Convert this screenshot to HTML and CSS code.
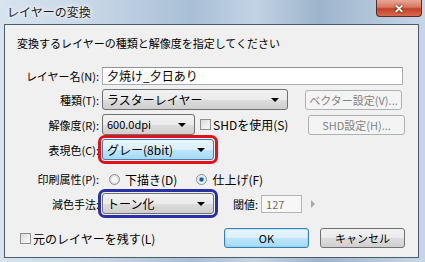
FILE: index.html
```html
<!DOCTYPE html>
<html lang="ja">
<head>
    <meta charset="utf-8" />
    <title>レイヤーの変換</title>
    <link rel="stylesheet" href="styles.css">
</head>
<body>
    <div class="window">
        <div class="titlebar">
            <span class="title">レイヤーの変換</span>
            <span class="close">✕</span>
        </div>
        <div class="client">
            <p class="intro">変換するレイヤーの種類と解像度を指定してください</p>

            <div class="row row-name">
                <label class="lbl">レイヤー名(N):</label>
                <div class="edit name">夕焼け_夕日あり</div>
            </div>

            <div class="row row-type">
                <label class="lbl">種類(T):</label>
                <div class="combo type">ラスターレイヤー<i class="arrow"></i></div>
                <button class="btn off">ベクター設定(V)...</button>
            </div>

            <div class="row row-res">
                <label class="lbl">解像度(R):</label>
                <div class="combo res">600.0dpi<i class="arrow"></i></div>
                <span class="check"><i class="box"></i>SHDを使用(S)</span>
                <button class="btn off shd">SHD設定(H)...</button>
            </div>

            <div class="row row-color">
                <label class="lbl">表現色(C):</label>
                <div class="combo focus mark-red">グレー(8bit)<i class="arrow"></i></div>
            </div>

            <div class="row row-print">
                <label class="lbl">印刷属性(P):</label>
                <span class="radio off-radio"><i class="dot"></i>下描き(D)</span>
                <span class="radio on"><i class="dot"></i>仕上げ(F)</span>
            </div>

            <div class="row row-reduce">
                <label class="lbl">減色手法:</label>
                <div class="combo mark-blue">トーン化<i class="arrow"></i></div>
                <span class="thr-lbl">閾値:</span>
                <div class="edit thr">127</div>
                <i class="spin"></i>
            </div>

            <div class="row row-bottom">
                <span class="check keep"><i class="box"></i>元のレイヤーを残す(L)</span>
                <button class="btn ok">OK</button>
                <button class="btn cancel">キャンセル</button>
            </div>
        </div>
    </div>
</body>
</html>
```

FILE: styles.css
```css
* {
    box-sizing: border-box;
}
html, body {
    margin: 0;
    padding: 0;
}
body {
    width: 425px;
    height: 262px;
    overflow: hidden;
    font-family: "Noto Sans CJK JP", sans-serif;
    font-size: 11px;
    color: #000;
}
.window {
    width: 425px;
    height: 262px;
    padding: 0 6px 4px 4px;
    display: flex;
    flex-direction: column;
    background: linear-gradient(90deg, #d7e3ef 0%, #c9d8e8 20%, #a9bfd6 45%, #c3d3e4 60%, #9db4cc 75%, #c6d6e7 100%);
}
.titlebar {
    height: 24px;
    display: flex;
    align-items: flex-start;
    justify-content: space-between;
}
.title {
    font-size: 12px;
    line-height: 24px;
    padding-left: 3px;
    color: #1a1a1a;
    text-shadow: 0 0 6px #fff, 0 0 3px #fff;
}
.close {
    width: 46px;
    height: 17px;
    margin-right: -3px;
    border: 1px solid #5e2a22;
    border-top: none;
    border-radius: 0 0 4px 4px;
    background: linear-gradient(#e9a798 0%, #d9765f 45%, #c2412a 55%, #d86a4c 100%);
    color: #fff;
    font-size: 12px;
    font-weight: bold;
    line-height: 16px;
    text-align: center;
    text-shadow: 0 0 2px #4a1a12, 0 0 1px #4a1a12;
}
.client {
    flex: 1;
    background: #f0f0f0;
    border: 1px solid #4c5c6c;
    padding-top: 11px;
    display: flex;
    flex-direction: column;
}
.intro {
    margin: 0 0 0 12px;
    line-height: 14px;
}
.row {
    display: flex;
    align-items: center;
}
.lbl {
    width: 94px;
    text-align: right;
    margin-right: 3px;
    white-space: nowrap;
}
.row-name { margin-top: 17px; height: 18px; }
.row-type { margin-top: 4px; height: 21px; }
.row-res { margin-top: 4px; height: 21px; }
.row-color { margin-top: 4px; height: 21px; }
.row-print { margin-top: 11px; height: 16px; }
.row-reduce { margin-top: 6px; height: 21px; }
.row-bottom { margin-top: 14px; height: 20px; }

.edit {
    height: 18px;
    background: #fff;
    border: 1px solid #abadb3;
    border-top-color: #8e9297;
    padding: 0 4px;
    line-height: 16px;
    font-size: 12px;
}
.edit.name {
    width: 301px;
}
.combo {
    position: relative;
    height: 21px;
    width: 112px;
    padding-left: 4px;
    line-height: 19px;
    font-size: 12px;
    border: 1px solid #707070;
    border-radius: 3px;
    background: linear-gradient(#f2f2f2 0%, #ebebeb 50%, #dddddd 51%, #cfcfcf 100%);
}
.combo.type {
    width: 186px;
}
.combo.res {
    width: 93px;
    font-size: 11px;
}
.combo.focus {
    border-color: #3c7fb1;
    background: linear-gradient(#eaf6fd 0%, #d9f0fc 50%, #bee6fd 51%, #a7d9f5 100%);
}
.arrow {
    position: absolute;
    right: 8px;
    top: 8px;
    width: 0;
    height: 0;
    border-left: 4px solid transparent;
    border-right: 4px solid transparent;
    border-top: 4px solid #000;
}
.mark-red {
    outline: 3px solid #e3111c;
    outline-offset: 1px;
}
.mark-blue {
    outline: 3px solid #2b2fa6;
    outline-offset: 1px;
}
.btn {
    height: 20px;
    padding: 0;
    font-family: inherit;
    font-size: 11px;
    color: #000;
    border: 1px solid #707070;
    border-radius: 3px;
    background: linear-gradient(#f2f2f2 0%, #ebebeb 50%, #dddddd 51%, #cfcfcf 100%);
}
.btn.off {
    width: 97px;
    margin-left: 17px;
    color: #838383;
    border-color: #adb2b5;
    background: #f4f4f4;
}
.btn.shd {
    margin-left: auto;
    margin-right: 13px;
}
.check {
    display: flex;
    align-items: center;
    white-space: nowrap;
}
.row-res .check {
    margin-left: 5px;
    font-size: 12px;
}
.box {
    width: 11px;
    height: 11px;
    margin-right: 2px;
    border: 1px solid #8f8f8f;
    background: linear-gradient(135deg, #dcdcdc, #fbfbfb);
}
.radio {
    display: flex;
    align-items: center;
    font-size: 12px;
    white-space: nowrap;
}
.radio.off-radio {
    margin-left: 7px;
}
.radio.on {
    margin-left: 19px;
}
.dot {
    width: 11px;
    height: 11px;
    margin-right: 5px;
    border-radius: 50%;
    border: 1px solid #8f8f8f;
    background: radial-gradient(circle, #f4f4f4 0 40%, #dcdcdc 60%, #f8f8f8 100%);
}
.radio.on .dot {
    background: radial-gradient(circle, #1d5a8c 0 25%, #6aaee0 32%, #dfeefa 48%, #f4f4f4 100%);
}
.thr-lbl {
    margin-left: 19px;
    margin-right: 3px;
}
.edit.thr {
    width: 41px;
    height: 18px;
    color: #6d6d6d;
    background: #f7f7f7;
    border-color: #b5b5b5;
    font-size: 11px;
}
.spin {
    margin-left: 9px;
    width: 0;
    height: 0;
    border-top: 4px solid transparent;
    border-bottom: 4px solid transparent;
    border-left: 4px solid #a8a8a8;
}
.keep {
    margin-left: 15px;
    font-size: 12px;
}
.btn.ok {
    width: 85px;
    margin-left: auto;
    border-color: #3c7fb1;
    box-shadow: inset 0 0 0 1px #48d1ff55;
    background: linear-gradient(#eaf6fd 0%, #d9f0fc 50%, #bee6fd 51%, #a7d9f5 100%);
}
.btn.cancel {
    width: 85px;
    margin-left: 11px;
    margin-right: 13px;
}
```
